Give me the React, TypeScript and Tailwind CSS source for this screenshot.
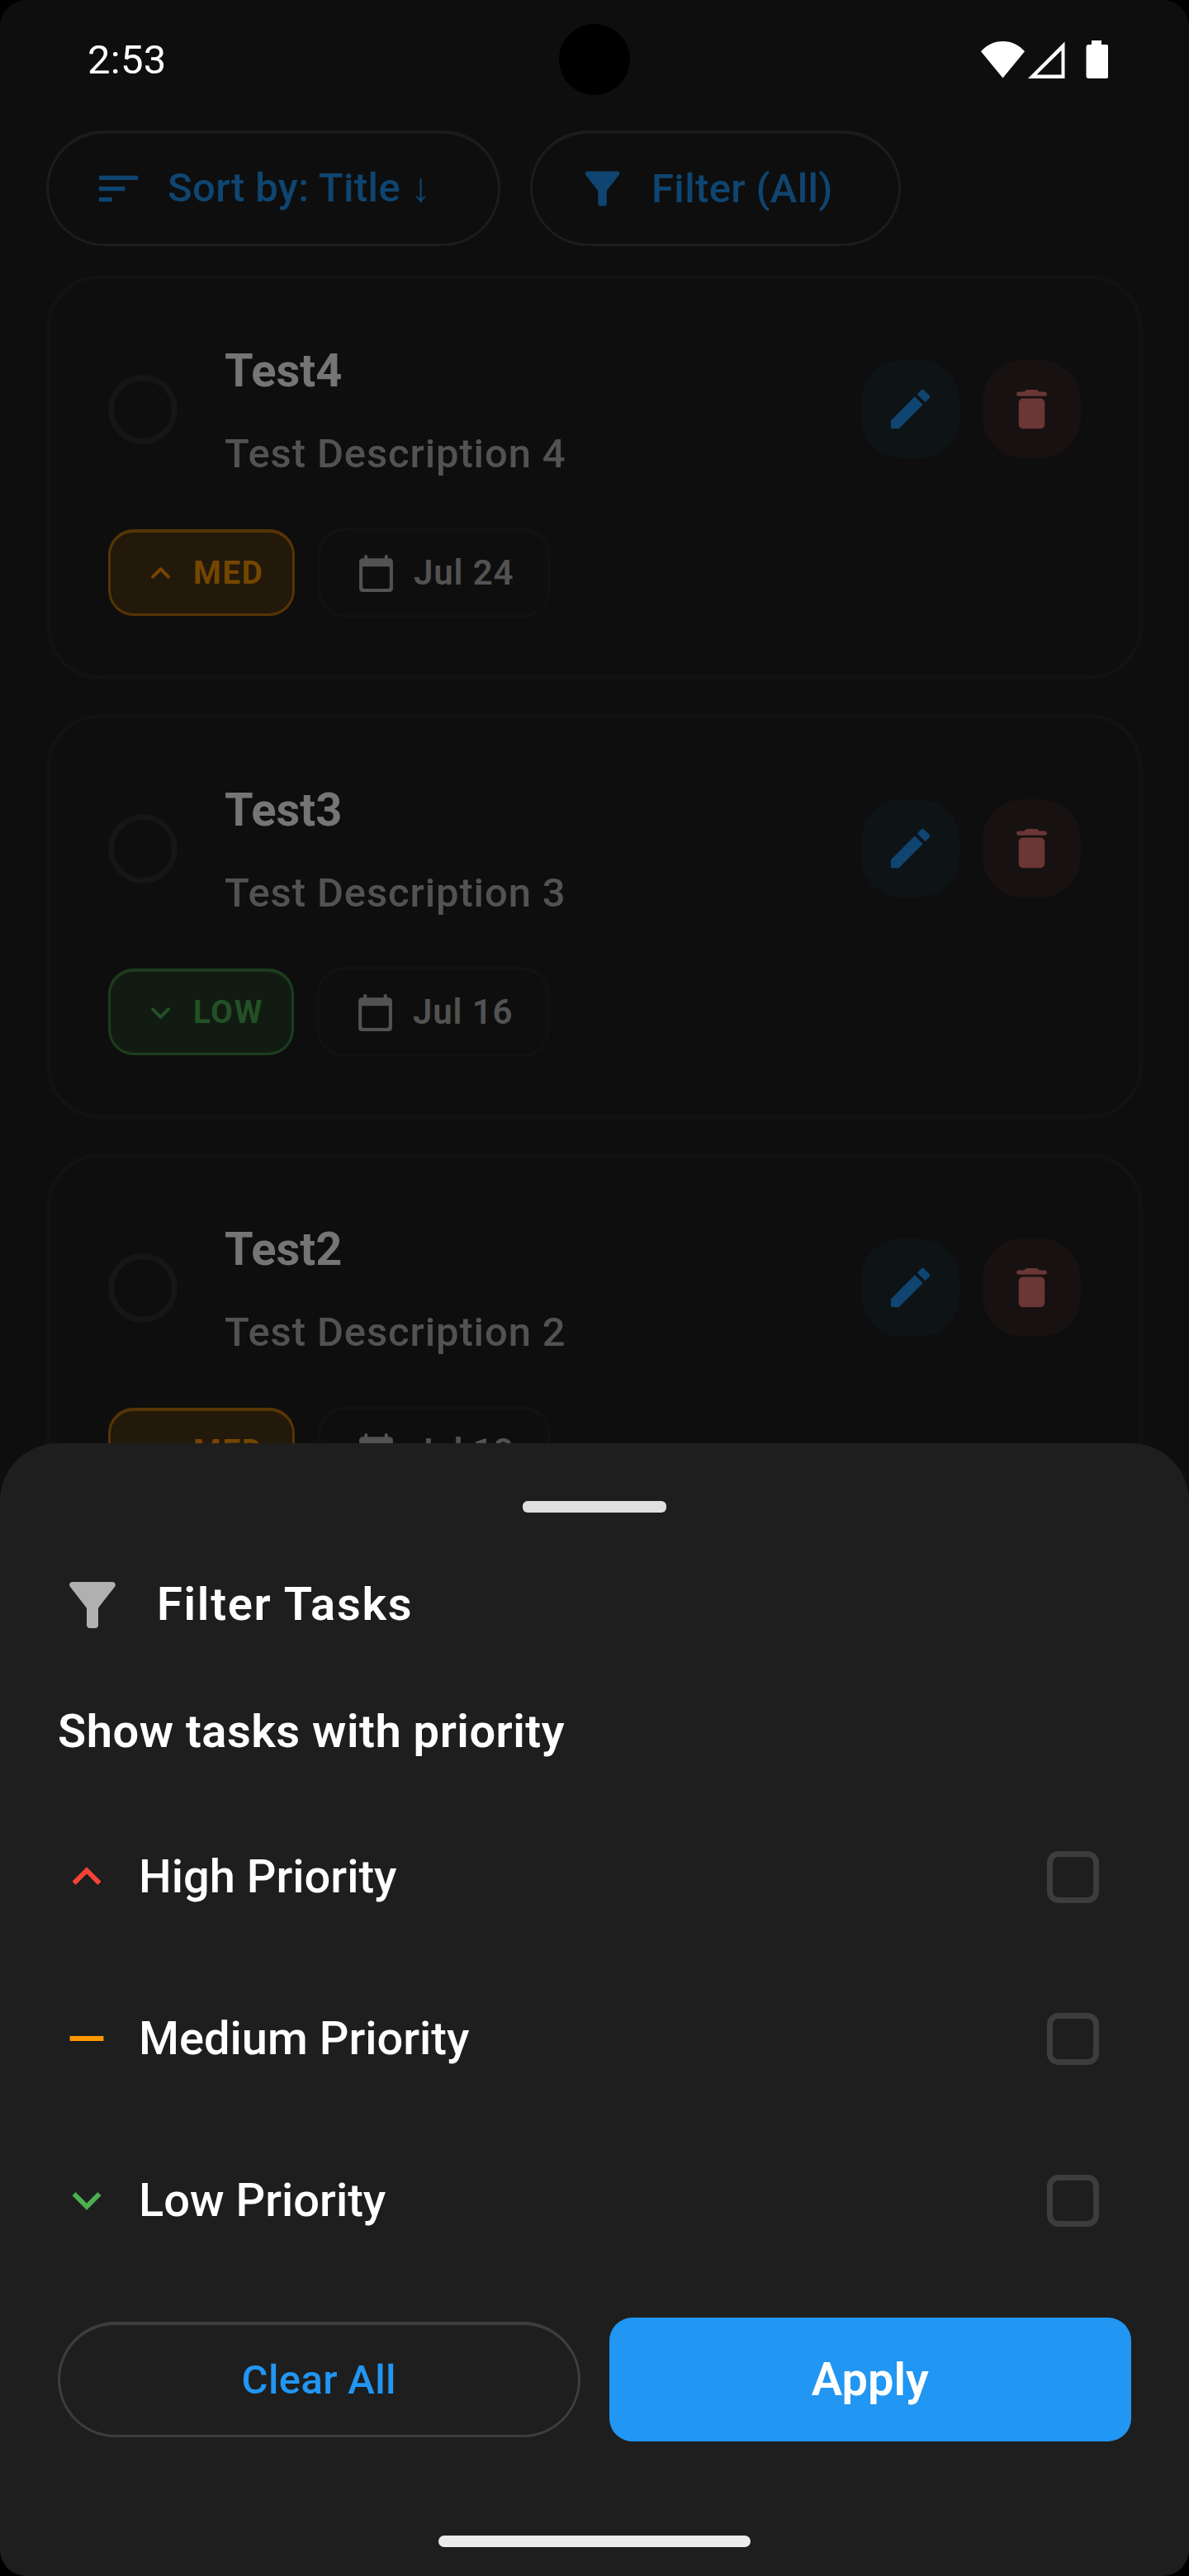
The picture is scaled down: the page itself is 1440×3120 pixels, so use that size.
import React from "react";

const ICONS = {
  sort: "M3 18h6v-2H3v2zM3 6v2h18V6H3zm0 7h12v-2H3v2z",
  funnel:
    "M4.25 5.61C6.27 8.2 10 13 10 13v6c0 .55.45 1 1 1h2c.55 0 1-.45 1-1v-6s3.72-4.8 5.74-7.39c.51-.66.04-1.61-.79-1.61H5.04c-.83 0-1.3.95-.79 1.61z",
  edit: "M3 17.46v3.04c0 .28.22.5.5.5h3.04c.13 0 .26-.05.35-.15L17.81 9.94l-3.75-3.75L3.15 17.1c-.1.1-.15.22-.15.36zM20.71 7.04c.39-.39.39-1.02 0-1.41l-2.34-2.34c-.39-.39-1.02-.39-1.41 0l-1.83 1.83 3.75 3.75 1.83-1.83z",
  trash:
    "M6 19c0 1.1.9 2 2 2h8c1.1 0 2-.9 2-2V9c0-1.1-.9-2-2-2H8c-1.1 0-2 .9-2 2v10zM18 4h-2.5l-.71-.71c-.18-.18-.44-.29-.7-.29H9.91c-.26 0-.52.11-.7.29L8.5 4H6c-.55 0-1 .45-1 1s.45 1 1 1h12c.55 0 1-.45 1-1s-.45-1-1-1z",
  calendar:
    "M20 3h-1V2c0-.55-.45-1-1-1s-1 .45-1 1v1H7V2c0-.55-.45-1-1-1s-1 .45-1 1v1H4c-1.1 0-2 .9-2 2v16c0 1.1.9 2 2 2h16c1.1 0 2-.9 2-2V5c0-1.1-.9-2-2-2zm-1 18H5c-.55 0-1-.45-1-1V8h16v12c0 .55-.45 1-1 1z",
  upRound:
    "M8.12 14.71L12 10.83l3.88 3.88c.39.39 1.02.39 1.41 0 .39-.39.39-1.02 0-1.41L12.7 8.71c-.39-.39-1.02-.39-1.41 0L6.7 13.3c-.39.39-.39 1.02 0 1.41.39.38 1.03.39 1.42 0z",
  downRound:
    "M8.12 9.29L12 13.17l3.88-3.88c.39-.39 1.02-.39 1.41 0 .39.39.39 1.02 0 1.41l-4.59 4.59c-.39.39-1.02.39-1.41 0L6.7 10.7c-.39-.39-.39-1.02 0-1.41.39-.38 1.03-.39 1.42 0z",
  up: "M7.41 15.41L12 10.83l4.59 4.58L18 14l-6-6-6 6z",
  down: "M7.41 8.59L12 13.17l4.59-4.58L18 10l-6 6-6-6z",
  minus: "M19 13H5v-2h14v2z",
};

function Icon({ name, className }: { name: keyof typeof ICONS; className: string }) {
  return (
    <svg viewBox="0 0 24 24" fill="currentColor" className={`shrink-0 ${className}`}>
      <path d={ICONS[name]} />
    </svg>
  );
}

function StatusBar() {
  return (
    <header className="flex h-[144px] items-center justify-between pr-[98px] pl-[106px] text-white">
      <span className="text-[49px] leading-none tracking-[0.3px]">2:53</span>
      <svg viewBox="0 0 154 46" className="h-[46px] w-[154px]" fill="currentColor">
        <path d="M26.5 45.5 0 13.2C7 5.4 16 1 26.5 1S46 5.4 53 13.2z" />
        <path fillRule="evenodd" d="M57 46 101.500 1.500V46zM67.500 41.500H97.500V12z" />
        <path d="M134 0h12v5h5.500a3 3 0 0 1 3 3v35a3 3 0 0 1-3 3h-21a3 3 0 0 1-3-3V8a3 3 0 0 1 3-3h3.500z" />
      </svg>
    </header>
  );
}

type Task = { title: string; description: string; priority: "MED" | "LOW"; date: string };

const TASKS: Task[] = [
  { title: "Test4", description: "Test Description 4", priority: "MED", date: "Jul 24" },
  { title: "Test3", description: "Test Description 3", priority: "LOW", date: "Jul 16" },
  { title: "Test2", description: "Test Description 2", priority: "MED", date: "Jul 18" },
];

function PriorityChip({ priority }: { priority: Task["priority"] }) {
  const tone =
    priority === "MED"
      ? "w-[226px] border-[#573406] bg-[#22190b] text-[#754600]"
      : "w-[225px] border-[#1d3c1e] bg-[#121b12] text-[#235025]";
  return (
    <div
      className={`flex h-[105px] items-center gap-[15px] rounded-[31px] border-[3px] border-t-4 pl-[36px] ${tone}`}
    >
      <Icon name={priority === "MED" ? "upRound" : "downRound"} className="size-[49px]" />
      <span className="text-[38.5px] leading-none font-bold tracking-[1.75px]">{priority}</span>
    </div>
  );
}

function TaskCard({ task }: { task: Task }) {
  return (
    <article className="h-[490px] rounded-[65px] border-[5px] border-[#121212] px-[70px] pt-[73px]">
      <div className="flex h-[174px] items-start">
        <span className="mt-[43px] size-[84px] shrink-0 rounded-full border-[7px] border-[#161616]" />
        <div className="mt-[3px] ml-[57px] flex flex-1 flex-col gap-[31px]">
          <h2 className="text-[56px] leading-[70px] font-bold text-[#757575]">{task.title}</h2>
          <p className="text-[49px] leading-[70px] font-medium tracking-[0.875px] text-[#525252]">
            {task.description}
          </p>
        </div>
        <div className="mt-[25px] flex gap-[28px]">
          <button className="grid size-[119px] place-items-center rounded-[49px] bg-[#0e1316] text-[#0f4570]">
            <Icon name="edit" className="size-[63px]" />
          </button>
          <button className="grid size-[119px] place-items-center rounded-[49px] bg-[#181111] text-[#6b3636]">
            <Icon name="trash" className="size-[63px]" />
          </button>
        </div>
      </div>
      <div className="mt-[54px] flex items-center gap-[28px]">
        <PriorityChip priority={task.priority} />
        <div className="flex h-[109px] w-[281px] items-center gap-[21px] rounded-[33px] border-[3px] border-t-4 border-[#121212] pl-[43px] text-[#525252]">
          <Icon name="calendar" className="size-[49px]" />
          <span className="text-[42px] leading-none font-semibold tracking-[0.875px] whitespace-nowrap">
            {task.date}
          </span>
        </div>
      </div>
    </article>
  );
}

const FILTERS = [
  { label: "High Priority", icon: "up", color: "text-[#f44336]" },
  { label: "Medium Priority", icon: "minus", color: "text-[#ff9800]" },
  { label: "Low Priority", icon: "down", color: "text-[#4caf50]" },
] as const;

function FilterSheet() {
  return (
    <section className="absolute inset-x-0 top-[1748px] bottom-0 flex flex-col rounded-t-[70px] bg-[#1e1e1e] px-[70px] pt-[70px] text-white">
      <div className="h-[14px] w-[174px] self-center rounded-[6px] bg-[#e0e0e0]" />
      <div className="mt-[70px] flex h-[84px] items-center gap-[36px]">
        <Icon name="funnel" className="size-[84px] text-[#b0b0b0]" />
        <h1 className="pb-[2px] text-[56px] leading-none font-semibold tracking-[1.75px]">Filter Tasks</h1>
      </div>
      <h3 className="mt-[71px] h-[80px] text-[56px] leading-[80px] font-semibold tracking-[0.525px]">
        Show tasks with priority
      </h3>
      <ul className="mt-[38px]">
        {FILTERS.map((f) => (
          <li key={f.label} className="flex h-[196px] items-center pr-[39px]">
            <Icon name={f.icon} className={`size-[70px] ${f.color}`} />
            <span className="ml-[28px] flex-1 text-[56px] leading-none font-medium">{f.label}</span>
            <span className="size-[63px] rounded-[14px] border-[7px] border-[#3d3d3d]" />
          </li>
        ))}
      </ul>
      <div className="mt-[44px] grid grid-cols-2 items-center gap-[35px]">
        <button className="h-[140px] rounded-full border-[3px] border-t-4 border-[#3d3d3d] text-[49px] leading-none font-medium tracking-[0.35px] text-[#2196f3]">
          Clear All
        </button>
        <button className="h-[150px] rounded-[28px] bg-[#2196f3] text-[56px] leading-none font-semibold">
          Apply
        </button>
      </div>
      <div className="mt-[114px] h-[14px] w-[378px] self-center rounded-full bg-[#ececec]" />
    </section>
  );
}

export default function App() {
  return (
    <div className="h-[3120px] w-[1440px] bg-black">
      <main className="relative h-full overflow-hidden rounded-[32px] bg-[#0e0e0e] font-['Roboto',sans-serif]">
        <StatusBar />
        <div className="absolute top-[29px] left-[677px] size-[86px] rounded-full bg-black" />
        <div className="mt-[14px] flex gap-[36px] px-[56px] font-medium tracking-[0.35px] text-[#0f4570]">
          <button className="flex h-[140px] w-[550px] items-center gap-[28px] rounded-full border-[3px] border-t-4 border-[#1c1c1c] pl-[53px]">
            <Icon name="sort" className="size-[63px]" />
            <span className="pb-[2px] text-[49px] leading-none whitespace-nowrap">Sort by: Title ↓</span>
          </button>
          <button className="flex h-[140px] w-[449px] items-center gap-[28px] rounded-full border-[3px] border-t-4 border-[#1c1c1c] pl-[53px]">
            <Icon name="funnel" className="size-[63px]" />
            <span className="text-[49px] leading-none whitespace-nowrap">Filter (All)</span>
          </button>
        </div>
        <div className="mt-[35px] flex flex-col gap-[42px] px-[56px]">
          {TASKS.map((task) => (
            <TaskCard key={task.title} task={task} />
          ))}
        </div>
        <FilterSheet />
      </main>
    </div>
  );
}
